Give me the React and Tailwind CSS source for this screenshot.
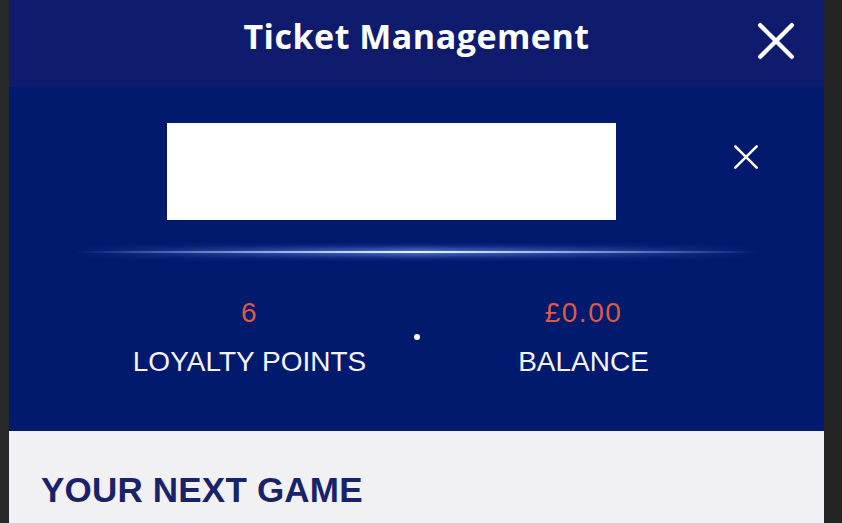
// Account summary sheet: header, member card area, stats and next game section
const Cross = ({ size, stroke }) => (
  <svg width={size} height={size} viewBox={`0 0 ${size} ${size}`} fill="none" stroke="currentColor" strokeWidth={stroke} strokeLinecap="round">
    <line x1={stroke / 2 + 1} y1={stroke / 2 + 1} x2={size - stroke / 2 - 1} y2={size - stroke / 2 - 1} />
    <line x1={size - stroke / 2 - 1} y1={stroke / 2 + 1} x2={stroke / 2 + 1} y2={size - stroke / 2 - 1} />
  </svg>
);

const Stat = ({ value, label }) => (
  <div className="w-[300px] flex flex-col items-center">
    <span className="text-[28px] leading-none tracking-[1.5px] text-[#dd5a44]">{value}</span>
    <span className="mt-[21px] text-[28px] leading-none text-[#f3f5ff]">{label}</span>
  </div>
);

const App = () => {
  return (
    <div className="w-[842px] h-[523px] flex overflow-hidden font-['Liberation_Sans',Arial,sans-serif]">
      <div className="w-[9px] bg-[#282828]" />

      <main className="flex-1 flex flex-col">
        {/* Title bar */}
        <header className="h-[87px] bg-[#0f1b6d] grid grid-cols-[1fr_auto_1fr] items-start">
          <div />
          <h1 className="pt-[19px] text-[34px] leading-none font-bold text-white font-['Open_Sans',sans-serif] tracking-[0.5px]">
            Ticket Management
          </h1>
          <div className="flex justify-end pr-[29px] pt-[22px]">
            <button aria-label="Close" className="text-white">
              <Cross size={38} stroke={4.4} />
            </button>
          </div>
        </header>

        {/* Member card and balances */}
        <section className="h-[344px] bg-[#011a6e] flex flex-col items-center pt-[36px] shadow-[0_1px_0_#1a1550,0_2px_0_#d9d6f4]">
          <div className="w-full flex items-start">
            <div className="w-[158px]" />
            <div className="w-[449px] h-[97px] bg-white" />
            <button aria-label="Remove card" className="ml-[117px] mt-[21px] text-white">
              <Cross size={26} stroke={2.6} />
            </button>
          </div>

          <div className="relative mt-[31px] w-[683px] h-[2px]">
            <div className="absolute inset-x-0 -top-[2px] h-[6px] blur-[3px] bg-linear-to-r from-transparent via-[#6f93ff] to-transparent" />
            <div className="absolute inset-0 bg-linear-to-r from-transparent via-[#eef4ff] to-transparent" />
          </div>

          <div className="mt-[46px] flex items-center">
            <Stat value="6" label="LOYALTY POINTS" />
            <div className="w-[34px] flex justify-center pb-[2px]">
              <span className="w-[6px] h-[6px] rounded-full bg-white" />
            </div>
            <Stat value="£0.00" label="BALANCE" />
          </div>
        </section>

        {/* Upcoming fixture */}
        <section className="flex-1 bg-[#f1f0f3] pl-[32px] pt-[41px]">
          <h2 className="text-[35px] leading-none font-bold text-[#1a2367] tracking-[0.2px]">
            YOUR NEXT GAME
          </h2>
        </section>
      </main>

      <div className="w-[18px] bg-[#232323]" />
    </div>
  );
};

export default App;
